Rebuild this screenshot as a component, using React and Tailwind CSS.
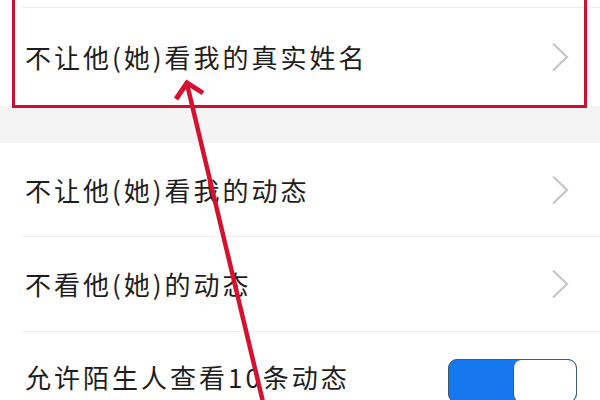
import React from "react";

function Chevron() {
  return (
    <svg width="18" height="30" viewBox="0 0 18 30" className="shrink-0">
      <polyline points="2,1.5 16,15 2,28.5" fill="none" stroke="#c6c6c6" strokeWidth="2.2" strokeLinejoin="miter" />
    </svg>
  );
}

function Row({ text, right, border = true, h }) {
  return (
    <div className={`ml-[22px] flex items-center justify-between pl-[3px] pr-[31px] ${h} ${border ? "border-b border-[#ececec]" : ""}`}>
      <span className="text-[26px] leading-none tracking-[3px] text-[#1e1e1e] whitespace-nowrap">{text}</span>
      {right}
    </div>
  );
}

export default function App() {
  return (
    <div
      className="relative w-[600px] h-[400px] overflow-hidden bg-white"
      style={{ fontFamily: '"Noto Sans CJK SC", "Noto Sans", sans-serif' }}
    >
      <div className="h-[8px] ml-[22px] border-b border-[#ededed]" />
      <Row text="不让他(她)看我的真实姓名" right={<Chevron />} border={false} h="h-[98px]" />
      <div className="h-[37px] bg-[#f4f4f4]" />
      <Row text="不让他(她)看我的动态" right={<Chevron />} h="h-[94px]" />
      <Row text="不看他(她)的动态" right={<Chevron />} h="h-[95px]" />
      <div className="ml-[22px] flex items-start justify-between pl-[3px] pr-[23px] pt-[27px] h-[95px]">
        <span className="text-[26px] leading-[26px] mt-[5px] tracking-[3px] text-[#1e1e1e] whitespace-nowrap">允许陌生人查看10条动态</span>
        <div className="flex w-[129px] h-[44px] rounded-[9px] border-[1.5px] border-[#3d5873] bg-[#1678ef] overflow-hidden">
          <div className="flex-1" />
          <div className="w-[63px] h-full bg-white rounded-[8px] border-l-[1.5px] border-[#3d5873]" />
        </div>
      </div>

      {/* red annotation box */}
      <div className="absolute left-[12px] top-[-4px] w-[575px] h-[112px] border-[3px] border-[#c8132f] pointer-events-none" />

      {/* red arrow */}
      <svg className="absolute left-0 top-0 pointer-events-none" width="600" height="400" viewBox="0 0 600 400">
        <line x1="187" y1="84" x2="263" y2="402" stroke="#d4112e" strokeWidth="4.5" />
        <polyline points="176,99 187,83 203,93" fill="none" stroke="#d4112e" strokeWidth="5" strokeLinejoin="miter" strokeLinecap="butt" />
      </svg>
    </div>
  );
}
